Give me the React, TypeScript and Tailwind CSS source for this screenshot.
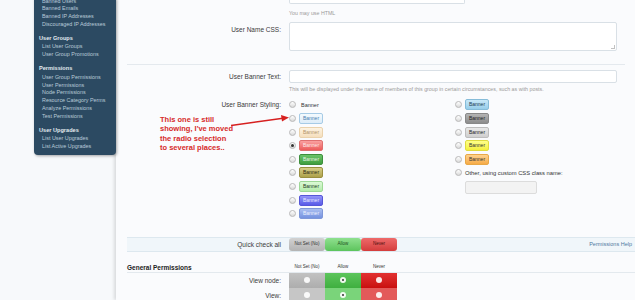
import React from 'react';

const sidebar = [
  { title: '', items: ['Banned Users', 'Banned Emails', 'Banned IP Addresses', 'Discouraged IP Addresses'] },
  { title: 'User Groups', items: ['List User Groups', 'User Group Promotions'] },
  {
    title: 'Permissions',
    items: [
      'User Group Permissions',
      'User Permissions',
      'Node Permissions',
      'Resource Category Perms',
      'Analyze Permissions',
      'Test Permissions',
    ],
  },
  { title: 'User Upgrades', items: ['List User Upgrades', 'List Active Upgrades'] },
];

const leftBanners = [
  { cls: '', checked: false },
  { cls: 'bg-linear-to-b from-[#f4fafe] to-[#dcecf8] border-[#a6cbe6] text-[#4a7eb0]', checked: false },
  { cls: 'bg-linear-to-b from-[#fdf3e2] to-[#f5dfbd] border-[#ead2ac] text-[#b39469]', checked: false },
  { cls: 'bg-linear-to-b from-[#f9a0a0] to-[#ec5a5a] border-[#e07070] text-[#fde8e8]', checked: true },
  { cls: 'bg-linear-to-b from-[#6ac46a] to-[#3e9e3e] border-[#3d8f3d] text-[#e6f5e6]', checked: false },
  { cls: 'bg-linear-to-b from-[#d6cd86] to-[#ada14a] border-[#9a8f3f] text-[#2e2a10]', checked: false },
  { cls: 'bg-linear-to-b from-[#dcf9d6] to-[#b3ecab] border-[#9ed897] text-[#1f3a1c]', checked: false },
  { cls: 'bg-linear-to-b from-[#9494f8] to-[#5a5ae8] border-[#5656d8] text-[#e8e8ff]', checked: false },
  { cls: 'bg-linear-to-b from-[#abbff0] to-[#7592e0] border-[#7f98d9] text-[#eef2ff]', checked: false },
];

const rightBanners = [
  'bg-linear-to-b from-[#c8e8f8] to-[#97cdea] border-[#86bcd9] text-[#1e3a4e]',
  'bg-linear-to-b from-[#b4b4b4] to-[#8c8c8c] border-[#888888] text-[#222222]',
  'bg-linear-to-b from-[#e8e8e8] to-[#cfcfcf] border-[#bdbdbd] text-[#222222]',
  'bg-linear-to-b from-[#ffff88] to-[#f5f03a] border-[#e0dc40] text-[#333333]',
  'bg-linear-to-b from-[#fdd28e] to-[#f6ab45] border-[#e8a848] text-[#333333]',
];

const Radio = ({ checked = false }: { checked?: boolean }) => (
  <span className="flex h-[7px] w-[7px] shrink-0 items-center justify-center rounded-full border border-[#b9b9b9] bg-linear-to-b from-white to-[#dadada]">
    {checked && <span className="h-[3px] w-[3px] rounded-full bg-[#333]" />}
  </span>
);

const Banner = ({ cls }: { cls: string }) =>
  cls ? (
    <span
      className={`flex h-[11px] w-[24px] items-center justify-center rounded-[2px] border text-[5px] leading-none ${cls}`}
    >
      Banner
    </span>
  ) : (
    <span className="pl-[2px] text-[5.5px] text-[#333]">Banner</span>
  );

const CellRadio = ({ checked = false }: { checked?: boolean }) => (
  <span className="flex h-[6px] w-[6px] items-center justify-center rounded-full bg-white/90">
    {checked && <span className="h-[2px] w-[2px] rounded-full bg-[#333]" />}
  </span>
);

export default function App() {
  return (
    <div
      className="relative flex h-[300px] w-[635px] overflow-hidden bg-[#f7f9fb] text-[#3a3a3a]"
      style={{ fontFamily: '"Liberation Sans", Arial, sans-serif' }}
    >
      {/* admin sidebar */}
      <aside className="z-10 w-[116px] shrink-0 pl-[34px]">
        <div className="-mt-[2.5px] rounded-b-[4px] bg-[#2c4a62] pb-[4px] pl-[5px] shadow-[1px_1px_3px_rgba(0,0,0,0.35)]">
          {sidebar.map(group => (
            <div key={group.items[0]}>
              {group.title && (
                <div className="mt-[5.3px] h-[9.5px] text-[5.6px] font-bold leading-[9.5px] text-[#e3eaf0]">
                  {group.title}
                </div>
              )}
              {group.items.map(item => (
                <div key={item} className="h-[7.8px] pl-[3px] text-[5.4px] leading-[7.8px] text-[#b9cbd9]">
                  {item}
                </div>
              ))}
            </div>
          ))}
        </div>
      </aside>

      {/* main content */}
      <main className="flex-1 bg-[#fafbfd] pl-[11px] shadow-[-2px_0_3px_rgba(0,0,0,0.12)]">
        <div className="ml-[162px] h-[4px] w-[176px] rounded-b-[2px] border border-t-0 border-[#d9e0e6] bg-white" />
        <div className="ml-[162px] mt-[5px] h-[8px] text-[5.3px] leading-[8px] text-[#9a9a9a]">You may use HTML</div>

        <div className="mt-[5px] flex">
          <div className="w-[154px] pt-[2.5px] text-right text-[6.5px] leading-[9px]">User Name CSS:</div>
          <div className="relative ml-[8px] h-[29px] w-[328px] rounded-[2px] border border-[#d9e0e6] bg-white">
            <span className="absolute bottom-[1px] right-[1px] h-[4px] w-[4px] border-b border-r border-[#999] opacity-60" />
          </div>
        </div>

        <div className="mr-[10px] mt-[13px] h-px bg-[#e4e9ee]" />

        <div className="mt-[5px] flex items-center">
          <div className="w-[154px] text-right text-[6.5px] leading-[13px]">User Banner Text:</div>
          <div className="ml-[8px] h-[13px] w-[328px] rounded-[2px] border border-[#d9e0e6] bg-white" />
        </div>
        <div className="ml-[162px] mt-[2px] h-[8px] text-[5.3px] leading-[8px] text-[#9a9a9a]">
          This will be displayed under the name of members of this group in certain circumstances, such as with posts.
        </div>

        <div className="mt-[5.2px] flex">
          <div className="h-[13.6px] w-[154px] text-right text-[6.5px] leading-[13.6px]">User Banner Styling:</div>
          <div className="ml-[8px] grid w-[300px] grid-cols-[166px_1fr]">
            <div>
              {leftBanners.map((b, i) => (
                <div key={i} className="flex h-[13.6px] items-center gap-[3px]">
                  <Radio checked={b.checked} />
                  <Banner cls={b.cls} />
                </div>
              ))}
            </div>
            <div>
              {rightBanners.map(cls => (
                <div key={cls} className="flex h-[13.6px] items-center gap-[3px]">
                  <Radio />
                  <Banner cls={cls} />
                </div>
              ))}
              <div className="flex h-[13.6px] items-center gap-[3px]">
                <Radio />
                <span className="text-[5.8px] text-[#333]">Other, using custom CSS class name:</span>
              </div>
              <div className="ml-[10px] mt-[1px] h-[13px] w-[72px] rounded-[2px] border border-[#dcdcdc] bg-[#f3f3f3]" />
            </div>
          </div>
        </div>

        <div className="mt-[16.4px] flex h-[15px] items-center border-y border-[#dde8ef] bg-[#f0f6fa] pr-[3px]">
          <div className="w-[154px] text-right text-[6.5px]">Quick check all</div>
          <div className="ml-[8px] flex h-[13px]">
            <span className="flex w-[36px] items-center justify-center rounded-[3px] bg-linear-to-b from-[#d2d2d2] to-[#b3b3b3] text-[4.5px] text-[#333]">
              Not Set (No)
            </span>
            <span className="flex w-[36px] items-center justify-center rounded-[3px] bg-linear-to-b from-[#8fe08f] to-[#5cc45c] text-[4.5px] text-[#1d4d1d]">
              Allow
            </span>
            <span className="flex w-[36px] items-center justify-center rounded-[3px] bg-linear-to-b from-[#ee6a6a] to-[#d43c3c] text-[4.5px] text-[#4d0f0f]">
              Never
            </span>
          </div>
          <span className="ml-auto text-[5.5px] text-[#4f78a0]">Permissions Help</span>
        </div>

        <div className="mt-[11px] flex h-[10px] items-center border-b border-[#e3e9ee]">
          <div className="w-[154px] text-[6.5px] font-bold text-[#222]">General Permissions</div>
          <div className="ml-[8px] flex text-[4.5px] text-[#333]">
            <span className="w-[36px] text-center">Not Set (No)</span>
            <span className="w-[36px] text-center">Allow</span>
            <span className="w-[36px] text-center">Never</span>
          </div>
        </div>

        <div className="flex h-[15px] items-center">
          <div className="w-[154px] text-right text-[6.5px]">View node:</div>
          <div className="ml-[8px] flex h-full">
            <span className="flex w-[36px] items-center justify-center bg-linear-to-b from-[#c2c2c2] to-[#adadad]">
              <CellRadio />
            </span>
            <span className="flex w-[36px] items-center justify-center bg-linear-to-b from-[#5cc55c] to-[#3faf3f]">
              <CellRadio checked />
            </span>
            <span className="flex w-[36px] items-center justify-center bg-linear-to-b from-[#e23030] to-[#c90e0e]">
              <CellRadio />
            </span>
          </div>
        </div>
        <div className="flex h-[15px] items-center">
          <div className="w-[154px] text-right text-[6.5px]">View:</div>
          <div className="ml-[8px] flex h-full">
            <span className="flex w-[36px] items-center justify-center bg-[#c6c6c6]">
              <CellRadio />
            </span>
            <span className="flex w-[36px] items-center justify-center bg-[#7ad47a]">
              <CellRadio checked />
            </span>
            <span className="flex w-[36px] items-center justify-center bg-[#e35a5a]">
              <CellRadio />
            </span>
          </div>
        </div>
      </main>

      {/* red annotation drawn over the screenshot */}
      <div className="absolute left-[160px] top-[115px] text-[7.5px] font-bold leading-[9.4px] text-[#d62a2a]">
        <div>This one is still</div>
        <div>showing, I've moved</div>
        <div>the radio selection</div>
        <div>to several places..</div>
      </div>
      <svg className="absolute left-0 top-0" width="635" height="300" viewBox="0 0 635 300">
        <line x1="231" y1="125.5" x2="283" y2="118.3" stroke="#d62020" strokeWidth="1.6" />
        <polygon points="289,117.5 281,115 282,121.5" fill="#d62020" />
      </svg>
    </div>
  );
}
